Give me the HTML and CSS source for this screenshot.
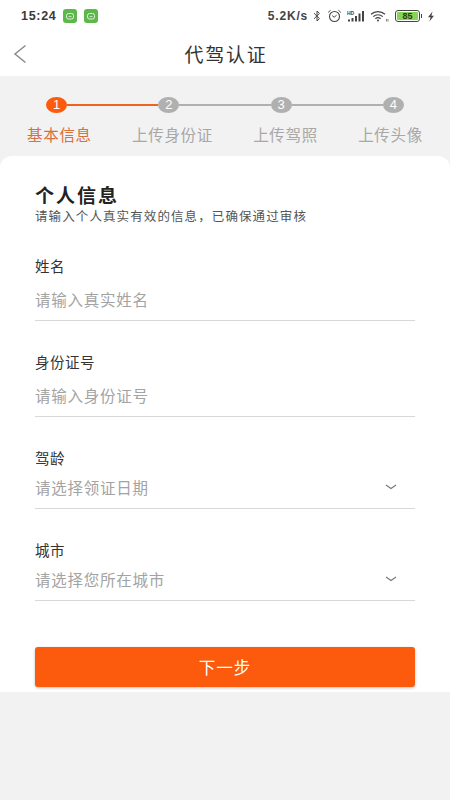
FILE: index.html
```html
<!DOCTYPE html>
<html lang="zh">
<head>
    <meta charset="UTF-8">
    <meta name="viewport" content="width=device-width, initial-scale=1.0">
    <title>代驾认证</title>
    <link rel="stylesheet" href="styles.css">
</head>
<body>

<div class="container">
    <div class="top-area">
        <!-- 状态栏 -->
        <div class="status-bar">
            <div class="status-left">
                <span class="time">15:24</span>
                <span class="app-badge"><svg viewBox="0 0 14 14" width="14" height="14"><rect width="14" height="14" rx="3" fill="#5cb848"/><rect x="3.5" y="4.5" width="7" height="5.5" rx="2" fill="none" stroke="#dff3da" stroke-width="1"/><path d="M5.5 7.5h3" stroke="#dff3da" stroke-width="0.8"/></svg></span>
                <span class="app-badge"><svg viewBox="0 0 14 14" width="14" height="14"><rect width="14" height="14" rx="3" fill="#5cb848"/><rect x="3.5" y="4.5" width="7" height="5.5" rx="2" fill="none" stroke="#dff3da" stroke-width="1"/><path d="M5.5 7.5h3" stroke="#dff3da" stroke-width="0.8"/></svg></span>
            </div>
            <div class="status-right">
                <span class="speed">5.2K/s</span>
                <svg viewBox="0 0 8 12" width="8" height="12" class="bt"><path d="M1 3.2l5.4 5.3L4 11V1l2.4 2.5L1 8.8" fill="none" stroke="#444" stroke-width="1"/></svg>
                <svg viewBox="0 0 15 14" width="15" height="14" class="alarm"><circle cx="7.5" cy="7.5" r="5" fill="none" stroke="#444" stroke-width="1.1"/><path d="M5.2 6.6l2 1.6 2.4-2M1.2 3.4l2.4-2.2M13.8 3.4l-2.4-2.2" fill="none" stroke="#444" stroke-width="1"/></svg>
                <svg viewBox="0 0 18 12" width="18" height="12" class="signal"><path d="M1 9.5h2v2H1zM4.5 8h2v3.5h-2zM8 6h2v5.5H8zM11.5 3.5h2v8h-2zM15 1h2v10.5h-2z" fill="#444"/><text x="0" y="5" class="hd">HD</text></svg>
                <svg viewBox="0 0 19 12" width="19" height="12" class="wifi"><path d="M1 4.2a10.5 10.5 0 0 1 14 0M3.2 6.6a7.2 7.2 0 0 1 9.6 0M5.4 8.8a4 4 0 0 1 5.2 0" fill="none" stroke="#444" stroke-width="1.2"/><circle cx="8" cy="10.6" r="1" fill="#444"/><path d="M16.5 9v2.5M18 9v2.5" stroke="#666" stroke-width="0.8"/></svg>
                <span class="battery"><span class="battery-level">85</span></span>
                <span class="battery-nub"></span>
                <svg viewBox="0 0 8 11" width="8" height="11"><path d="M5.5 0.5L1 6.2h2.6L2.4 10.5 7 4.8H4.4z" fill="#444"/></svg>
            </div>
        </div>
        <div class="title-bar">
            <svg class="back" viewBox="0 0 14 20" width="14" height="20"><path d="M12.5 1.5L2 10l10.5 8.5" fill="none" stroke="#8a8a8a" stroke-width="1.5"/></svg>
            <span class="title">代驾认证</span>
        </div>
    </div>

    <!-- 步骤条 -->
    <div class="steps">
        <div class="step-track">
            <span class="dot active">1</span>
            <span class="line active"></span>
            <span class="dot">2</span>
            <span class="line"></span>
            <span class="dot">3</span>
            <span class="line"></span>
            <span class="dot">4</span>
        </div>
        <div class="step-labels">
            <span class="active">基本信息</span>
            <span>上传身份证</span>
            <span>上传驾照</span>
            <span>上传头像</span>
        </div>
    </div>

    <div class="card">
        <h2>个人信息</h2>
        <p class="tip">请输入个人真实有效的信息，已确保通过审核</p>

        <div class="field">
            <div class="field-label">姓名</div>
            <div class="field-input">请输入真实姓名</div>
        </div>
        <div class="field">
            <div class="field-label">身份证号</div>
            <div class="field-input">请输入身份证号</div>
        </div>
        <div class="field select">
            <div class="field-label">驾龄</div>
            <div class="field-input">请选择领证日期
                <svg viewBox="0 0 12 6" width="12" height="6"><path d="M1 1l5 3.5L11 1" fill="none" stroke="#777" stroke-width="1.1"/></svg>
            </div>
        </div>
        <div class="field select">
            <div class="field-label">城市</div>
            <div class="field-input">请选择您所在城市
                <svg viewBox="0 0 12 6" width="12" height="6"><path d="M1 1l5 3.5L11 1" fill="none" stroke="#777" stroke-width="1.1"/></svg>
            </div>
        </div>

        <div class="button next">下一步</div>
    </div>
</div>

</body>
</html>
```

FILE: styles.css
```css
body {
    font-family: "Liberation Sans", "Noto Sans CJK SC", sans-serif;
    margin: 0;
    padding: 0;
    background-color: #f2f2f2;
    color: #222;
}
.container {
    display: flex;
    flex-direction: column;
    height: 800px;
    overflow: hidden;
}
.top-area {
    background-color: #fff;
}
.status-bar {
    display: flex;
    justify-content: space-between;
    align-items: center;
    height: 32px;
    padding: 0 15px 0 21px;
}
.status-left,
.status-right {
    display: flex;
    align-items: center;
}
.time {
    font-size: 12.5px;
    font-weight: bold;
    letter-spacing: 0.7px;
    color: #3a3a3a;
    margin-right: 7px;
}
.app-badge {
    display: flex;
    margin-right: 7px;
}
.speed {
    font-size: 12px;
    font-weight: bold;
    letter-spacing: 0.8px;
    color: #444;
    margin-right: 5px;
}
.bt {
    margin-right: 6px;
}
.alarm {
    margin-right: 5px;
}
.signal {
    margin-right: 5px;
}
.wifi {
    margin-right: 6px;
}
.hd {
    font-family: "Liberation Sans", sans-serif;
    font-size: 5px;
    font-weight: bold;
    fill: #444;
}
.battery {
    display: flex;
    width: 21px;
    height: 8px;
    padding: 1px;
    border: 1px solid #444;
    border-radius: 3px;
}
.battery-level {
    flex: 1;
    background-color: #86d455;
    border-radius: 1px;
    font-size: 9px;
    font-weight: bold;
    line-height: 8px;
    text-align: center;
    color: #2b3a20;
}
.battery-nub {
    width: 1px;
    height: 4px;
    margin: 0 5px 0 1px;
    background-color: #444;
}
.title-bar {
    position: relative;
    display: flex;
    justify-content: center;
    align-items: center;
    height: 44px;
    padding-bottom: 2px;
    box-sizing: border-box;
}
.back {
    position: absolute;
    left: 13px;
    top: 12px;
}
.title {
    font-size: 19px;
    letter-spacing: 1.7px;
    margin-right: -2px;
    color: #333;
}
.steps {
    height: 80px;
    flex-shrink: 0;
}
.step-track {
    display: flex;
    align-items: center;
    padding: 21px 46px 0;
}
.dot {
    width: 21px;
    height: 16px;
    border-radius: 50%;
    background-color: #b0b0b0;
    color: #fff;
    font-size: 13px;
    line-height: 16px;
    text-align: center;
    flex-shrink: 0;
}
.dot.active {
    background-color: #fc5a0c;
}
.line {
    flex: 1;
    height: 2px;
    background-color: #b0b0b0;
}
.line.active {
    background-color: #f0631d;
}
.step-labels {
    display: flex;
    justify-content: space-between;
    padding: 13px 27px 0;
    font-size: 15.5px;
    line-height: 20px;
    letter-spacing: 0.7px;
    color: #a8a8a8;
}
.step-labels .active {
    color: #d96f3e;
}
.card {
    height: 536px;
    flex-shrink: 0;
    padding: 29px 35px 0;
    box-sizing: border-box;
    background-color: #fff;
    border-radius: 12px 12px 0 0;
}
h2 {
    margin: 0;
    font-size: 19px;
    line-height: 24px;
    font-weight: bold;
    letter-spacing: 2px;
    color: #222;
}
.tip {
    margin: 0;
    font-size: 12.5px;
    line-height: 16px;
    letter-spacing: 1.1px;
    color: #555;
}
.field {
    margin-top: 32px;
    border-bottom: 1px solid #d8d8d8;
}
.field-label {
    font-size: 14.5px;
    line-height: 20px;
    letter-spacing: 0.5px;
    color: #333;
}
.field-input {
    display: flex;
    justify-content: space-between;
    align-items: center;
    height: 43px;
    padding: 1px 18px 0 0;
    box-sizing: border-box;
    font-size: 15.5px;
    letter-spacing: 0.75px;
    color: #a3a3a3;
}
.select .field-input {
    height: 39px;
    padding: 0 18px 3px 0;
}
.next {
    display: flex;
    justify-content: center;
    align-items: center;
    height: 40px;
    margin-top: 46px;
    background-color: #fc5a0c;
    border-radius: 3px;
    box-shadow: 0 1px 3px rgba(0, 0, 0, 0.25);
    font-size: 16.5px;
    letter-spacing: 1px;
    color: #fff;
}
```
